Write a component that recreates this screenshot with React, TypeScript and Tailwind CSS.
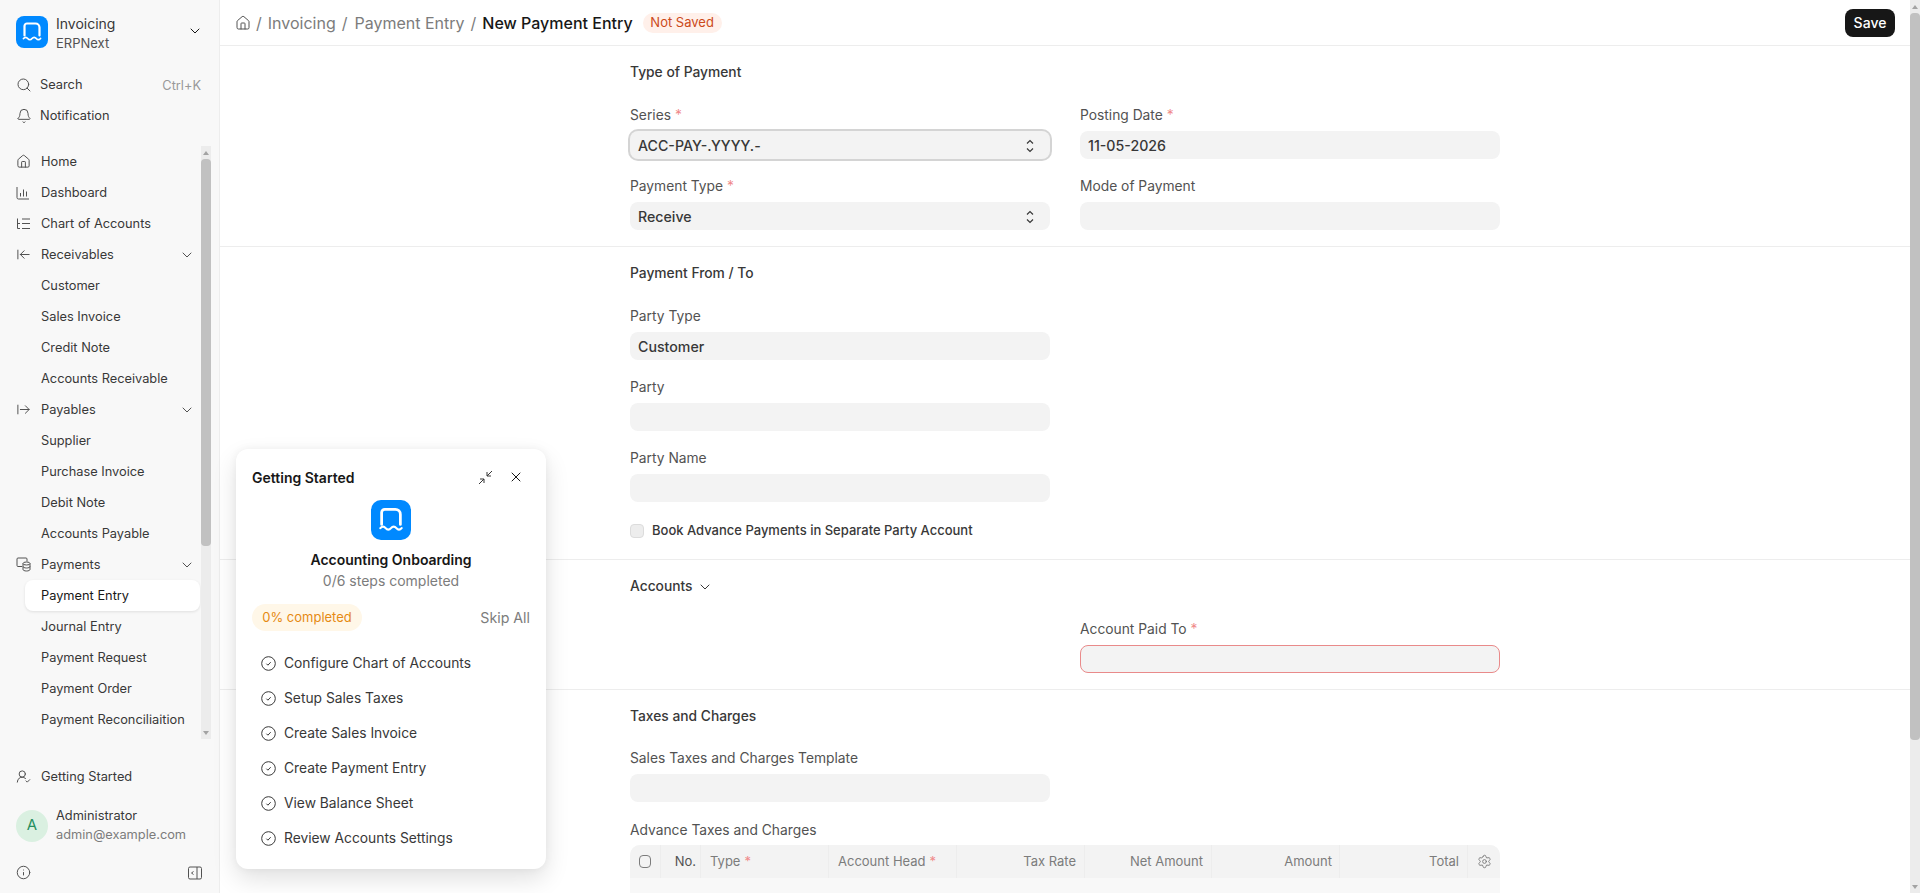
import { ArrowLeftToLine, ArrowRightFromLine, Bell, ChevronDown, House, Info, Search, Settings, UserRoundCheck, X } from "lucide-react";

const ic = "text-[#525252] shrink-0";

function Logo({ size }: { size: number }) {
  return (
    <svg width={size} height={size} viewBox="0 0 32 32" className="shrink-0">
      <rect width="32" height="32" rx="8" fill="#0089ff" />
      <path d="M8.5 19.5V10a2.5 2.5 0 0 1 2.5-2.5h8.5a4 4 0 0 1 4 4v8" fill="none" stroke="#fff" strokeWidth="2.2" strokeLinecap="round" />
      <path d="M7.5 22.5c1.4-1.6 2.8-1.6 4.2 0s2.9 1.6 4.3 0 2.9-1.6 4.3 0 2.8 1.6 4.2 0" fill="none" stroke="#fff" strokeWidth="1.8" strokeLinecap="round" />
    </svg>
  );
}

function BarsIcon() {
  return (
    <svg width="14" height="14" viewBox="0 0 14 14" fill="none" stroke="#525252" className="shrink-0">
      <path d="M1 1v10.5a1.5 1.5 0 0 0 1.5 1.5H13" />
      <path d="M4.5 7v3.5M7.5 3.5v7M10.5 5.5v5" />
    </svg>
  );
}

function TreeIcon() {
  return (
    <svg width="14" height="14" viewBox="0 0 14 14" fill="none" stroke="#525252" className="shrink-0">
      <path d="M1.5 1.5v10h2.5M1.5 6.5h2.5M6 2h8M6 6.5h8M6 11.5h8" />
    </svg>
  );
}

function PaymentsIcon() {
  return (
    <svg width="15" height="15" viewBox="0 0 15 15" fill="none" stroke="#525252" className="shrink-0">
      <path d="M6 9.5H2a1 1 0 0 1-1-1V2a1 1 0 0 1 1-1h8a1 1 0 0 1 1 1v2.5" />
      <ellipse cx="10.5" cy="6.5" rx="3.5" ry="1.5" />
      <path d="M7 6.5v6c0 .8 1.6 1.5 3.5 1.5s3.5-.7 3.5-1.5v-6M7 9.5c0 .8 1.6 1.5 3.5 1.5S14 10.3 14 9.5" />
    </svg>
  );
}

function SidePanelIcon() {
  return (
    <svg width="14" height="14" viewBox="0 0 14 14" fill="none" stroke="#525252" className="shrink-0">
      <rect x="0.5" y="1" width="13" height="12" rx="1.5" />
      <path d="M9 1v12" />
      <path d="M5.5 5.5 3.5 7l2 1.5" />
    </svg>
  );
}

function UpDown() {
  return (
    <svg width="8" height="14" viewBox="0 0 8 14" fill="none" stroke="#383838" strokeWidth="1.2" className="shrink-0">
      <path d="M1 4.5 4 1.5l3 3M1 9.5l3 3 3-3" />
    </svg>
  );
}

function Shrink() {
  return (
    <svg width="15" height="15" viewBox="0 0 15 15" fill="none" stroke="#383838" className="shrink-0">
      <path d="M14 1 9 6M9 2v4h4M1 14l5-5M6 13V9H2" />
    </svg>
  );
}

function StepCheck() {
  return (
    <svg width="15" height="15" viewBox="0 0 15 15" fill="none" stroke="#383838" className="shrink-0 mr-[8px]">
      <circle cx="7.5" cy="7.5" r="6.8" />
      <path d="M5.4 7.7l1.5 1.5 2.8-3" />
    </svg>
  );
}

function NavRow({ label, icon, chevron }: { label: string; icon?: React.ReactNode; chevron?: boolean }) {
  return (
    <div className="h-[31px] flex items-center relative pl-[16px] pr-[6px]">
      <div className="w-[25px] flex items-center shrink-0">{icon}</div>
      <span className="text-[#383838]">{label}</span>
      {chevron && <ChevronDown size={16} strokeWidth={1.5} className="text-[#525252] ml-auto" />}
    </div>
  );
}

function Scrollbar({ thumbH }: { thumbH: string }) {
  return (
    <div className="w-[10px] bg-[#ececec] flex flex-col items-center shrink-0">
      <div className="h-[13px] flex items-center justify-center shrink-0">
        <div className="w-0 h-0 border-x-[3.5px] border-x-transparent border-b-[4px] border-b-[#a3a3a3]" />
      </div>
      <div className="flex-1 w-full flex flex-col">
        <div className={`w-full bg-[#c1c1c1] rounded-[4px] ${thumbH}`} />
        <div className="flex-1" />
      </div>
      <div className="h-[13px] flex items-center justify-center shrink-0">
        <div className="w-0 h-0 border-x-[3.5px] border-x-transparent border-t-[4px] border-t-[#a3a3a3]" />
      </div>
    </div>
  );
}

function Sidebar() {
  return (
    <aside className="w-[220px] h-full shrink-0 bg-[#f8f8f8] border-r border-[#ededed] flex flex-col text-[12.8px]">
      <div className="h-[64px] pt-[16px] pl-[16px] pr-[16px] flex items-start shrink-0">
        <Logo size={32} />
        <div className="ml-[8px] flex-1 flex flex-col">
          <span className="text-[14px] leading-[17px] text-[#383838] mt-[-1px]">Invoicing</span>
          <span className="text-[13px] leading-[16px] text-[#525252] mt-[3px]">ERPNext</span>
        </div>
        <ChevronDown size={16} strokeWidth={1.5} className="text-[#171717] mt-[7px]" />
      </div>
      <div className="shrink-0 pt-[5px]">
        <div className="h-[31px] flex items-center pl-[16px] pr-[18px]">
          <Search size={16} strokeWidth={1.5} className={ic} />
          <span className="ml-[8px] text-[#383838]">Search</span>
          <span className="ml-auto text-[#999999] mt-[2px]">Ctrl+K</span>
        </div>
        <div className="h-[31px] flex items-center pl-[16px]">
          <Bell size={16} strokeWidth={1.5} className={ic} />
          <span className="ml-[8px] text-[#383838]">Notification</span>
        </div>
      </div>
      <div className="h-[593px] mt-[15px] flex shrink-0 pr-[8px]">
        <div className="flex-1 min-w-0">
          <NavRow label="Home" icon={<House size={15} strokeWidth={1.6} className={ic} />} />
          <NavRow label="Dashboard" icon={<BarsIcon />} />
          <NavRow label="Chart of Accounts" icon={<TreeIcon />} />
          <NavRow label="Receivables" chevron icon={<ArrowLeftToLine size={15} strokeWidth={1.6} className={ic} />} />
          <NavRow label="Customer" />
          <NavRow label="Sales Invoice" />
          <NavRow label="Credit Note" />
          <NavRow label="Accounts Receivable" />
          <NavRow label="Payables" chevron icon={<ArrowRightFromLine size={15} strokeWidth={1.6} className={ic} />} />
          <NavRow label="Supplier" />
          <NavRow label="Purchase Invoice" />
          <NavRow label="Debit Note" />
          <NavRow label="Accounts Payable" />
          <NavRow label="Payments" chevron icon={<PaymentsIcon />} />
          <div className="h-[31px] ml-[25px] mr-[1px] pl-[16px] flex items-center bg-white rounded-lg shadow-[0_1px_3px_rgba(0,0,0,0.1)] text-[#171717]">
            Payment Entry
          </div>
          <NavRow label="Journal Entry" />
          <NavRow label="Payment Request" />
          <NavRow label="Payment Order" />
          <NavRow label="Payment Reconciliaition" />
        </div>
        <Scrollbar thumbH="h-[387px]" />
      </div>
      <div className="shrink-0 mt-[22px] h-[31px] flex items-center pl-[16px]">
        <UserRoundCheck size={15} strokeWidth={1.6} className={ic} />
        <span className="ml-[10px] text-[#383838]">Getting Started</span>
      </div>
      <div className="shrink-0 mt-[16px] flex items-center pl-[16px]">
        <div className="w-[32px] h-[32px] rounded-full bg-[#daf0e1] flex items-center justify-center text-[15px] text-[#278f5e]">A</div>
        <div className="ml-[8px] flex flex-col">
          <span className="text-[#383838] leading-[16px]">Administrator</span>
          <span className="text-[#7c7c7c] leading-[16px] mt-[3px]">admin@example.com</span>
        </div>
      </div>
      <div className="shrink-0 mt-[22px] flex items-center justify-between pl-[16px] pr-[17px]">
        <Info size={15} strokeWidth={1.6} className={ic} />
        <SidePanelIcon />
      </div>
    </aside>
  );
}

function Req() {
  return <span className="text-[#f08a8a] ml-[4px]">*</span>;
}

function Field({ label, req, value, select, focus, error }: { label?: string; req?: boolean; value?: string; select?: boolean; focus?: boolean; error?: boolean }) {
  return (
    <div className="w-[420px]">
      <div className="h-[16px] leading-[16px] text-[13.8px] text-[#525252] mb-[8px]">
        {label}
        {req && <Req />}
      </div>
      <div
        className={`h-[28px] rounded-lg bg-[#f3f3f3] flex items-center justify-between pl-[8px] pr-[16px] pt-[2px] text-[14.2px] font-medium text-[#383838] ${
          focus ? "ring-2 ring-[#d4d4d4]" : ""
        } ${error ? "border border-[#e98a8a]" : ""}`}
      >
        <span>{value}</span>
        {select && <UpDown />}
      </div>
    </div>
  );
}

function Section({ title, chevron, children }: { title: string; chevron?: boolean; children?: React.ReactNode }) {
  return (
    <section className="border-b border-[#ededed] flex flex-col pl-[410px]">
      <div className="w-[870px]">
        <div className="h-[17px] mt-[18px] flex items-center text-[13.8px] font-[450] text-[#383838]">
          {title}
          {chevron && <ChevronDown size={16} strokeWidth={1.5} className="ml-[4px] text-[#383838]" />}
        </div>
        {children}
      </div>
    </section>
  );
}

function Th({ w, children, right, px = "px-[9px]" }: { w: string; children?: React.ReactNode; right?: boolean; px?: string }) {
  return (
    <div className={`${w} h-full border-r border-[#ededed] flex items-center shrink-0 ${px} ${right ? "justify-end" : ""}`}>
      {children}
    </div>
  );
}

function Form() {
  return (
    <div className="flex-1 min-h-0 overflow-hidden">
      <Section title="Type of Payment">
        <div className="mt-[26px] grid grid-cols-[420px_420px] gap-x-[30px] gap-y-[19px] pb-[16px]">
          <Field label="Series" req value="ACC-PAY-.YYYY.-" select focus />
          <Field label="Posting Date" req value="11-05-2026" />
          <Field label="Payment Type" req value="Receive" select />
          <Field label="Mode of Payment" />
        </div>
      </Section>
      <Section title="Payment From / To">
        <div className="mt-[26px] flex flex-col gap-[19px]">
          <Field label="Party Type" value="Customer" />
          <Field label="Party" />
          <Field label="Party Name" />
        </div>
        <div className="mt-[21px] mb-[20px] h-[16px] flex items-center text-[13px] font-medium text-[#383838]">
          <div className="w-[14px] h-[14px] rounded-[4px] bg-[#ededed] border border-[#dcdcdc] mr-[8px]" />
          Book Advance Payments in Separate Party Account
        </div>
      </Section>
      <Section title="Accounts" chevron>
        <div className="mt-[26px] pb-[16px] pl-[450px]">
          <Field label="Account Paid To" req error />
        </div>
      </Section>
      <Section title="Taxes and Charges">
        <div className="mt-[25px]">
          <Field label="Sales Taxes and Charges Template" />
        </div>
        <div className="mt-[20px] text-[13.8px] leading-[16px] text-[#525252] mb-[7px]">Advance Taxes and Charges</div>
        <div className="rounded-t-[10px] overflow-hidden h-[60px] bg-[#f8f8f8]">
          <div className="h-[33px] bg-[#f3f3f3] flex items-center text-[13px] text-[#7c7c7c]">
            <Th w="w-[31px]">
              <div className="w-[13px] h-[13px] rounded-[4px] border border-[#7c7c7c]" />
            </Th>
            <Th w="w-[40px]" right px="px-[4px]">
              <span className="text-[#525252]">No.</span>
            </Th>
            <Th w="w-[128px]">
              Type
              <Req />
            </Th>
            <Th w="w-[128px]">
              Account Head
              <Req />
            </Th>
            <Th w="w-[128px]" right px="px-[8px]">
              Tax Rate
            </Th>
            <Th w="w-[127px]" right px="px-[8px]">
              Net Amount
            </Th>
            <Th w="w-[128px]" right px="px-[7px]">
              Amount
            </Th>
            <Th w="w-[128px]" right px="px-[8px]">
              Total
            </Th>
            <div className="flex-1 flex justify-center">
              <Settings size={15} strokeWidth={1.5} className="text-[#7c7c7c]" />
            </div>
          </div>
        </div>
      </Section>
    </div>
  );
}

function Onboarding() {
  const steps = ["Configure Chart of Accounts", "Setup Sales Taxes", "Create Sales Invoice", "Create Payment Entry", "View Balance Sheet", "Review Accounts Settings"];
  return (
    <div className="absolute left-[236px] top-[449px] w-[310px] h-[420px] bg-white rounded-xl shadow-[0_10px_24px_rgba(0,0,0,0.12),0_0_8px_rgba(0,0,0,0.05)] px-[16px] pt-[20px] z-10 flex flex-col">
      <div className="flex items-center h-[16px] relative">
        <span className="text-[14px] font-semibold text-[#171717]">Getting Started</span>
        <div className="ml-auto flex items-center gap-[15px] pr-[6px]">
          <Shrink />
          <X size={16} strokeWidth={1.5} className="text-[#171717]" />
        </div>
      </div>
      <div className="self-center mt-[15px]">
        <Logo size={40} />
      </div>
      <div className="self-center mt-[11px] text-[14px] leading-[17px] font-semibold text-[#171717]">Accounting Onboarding</div>
      <div className="self-center mt-[4px] text-[14px] leading-[17px] text-[#7c7c7c]">0/6 steps completed</div>
      <div className="flex items-center justify-between mt-[15px]">
        <span className="h-[27px] w-[110px] rounded-full bg-[#fff7e8] text-[#e68a13] text-[13px] flex items-center justify-center">0% completed</span>
        <span className="text-[14.2px] text-[#7c7c7c]">Skip All</span>
      </div>
      <div className="flex flex-col mt-[15px]">
        {steps.map((s) => (
          <div key={s} className="h-[35px] flex items-center pl-[9px] text-[13.8px] text-[#383838]">
            <StepCheck />
            {s}
          </div>
        ))}
      </div>
    </div>
  );
}

export default function App() {
  return (
    <div className="relative w-full h-[893px] overflow-hidden flex bg-white font-['Inter',sans-serif]">
      <Sidebar />
      <div className="flex-1 min-w-0 flex flex-col h-full">
        <header className="h-[46px] shrink-0 border-b border-[#ededed] flex items-center pl-[15px] pr-[15px]">
          <House size={16} strokeWidth={1.5} className="text-[#525252]" />
          <span className="text-[16px] text-[#7c7c7c] ml-[5px]">/</span>
          <span className="text-[16px] text-[#7c7c7c] ml-[6px]">Invoicing</span>
          <span className="text-[16px] text-[#7c7c7c] ml-[6px]">/</span>
          <span className="text-[16px] text-[#7c7c7c] ml-[7px]">Payment Entry</span>
          <span className="text-[16px] text-[#7c7c7c] ml-[6px]">/</span>
          <span className="text-[16px] font-medium text-[#171717] ml-[6px]">New Payment Entry</span>
          <span className="ml-[10px] h-[20px] w-[79px] rounded-full bg-[#fff0ea] text-[#cc4a1a] text-[13px] flex items-center justify-center">Not Saved</span>
          <button className="ml-auto h-[28px] w-[50px] rounded-lg bg-[#171717] text-white text-[14px] font-medium">Save</button>
        </header>
        <Form />
      </div>
      <Scrollbar thumbH="h-[727px]" />
      <Onboarding />
    </div>
  );
}
